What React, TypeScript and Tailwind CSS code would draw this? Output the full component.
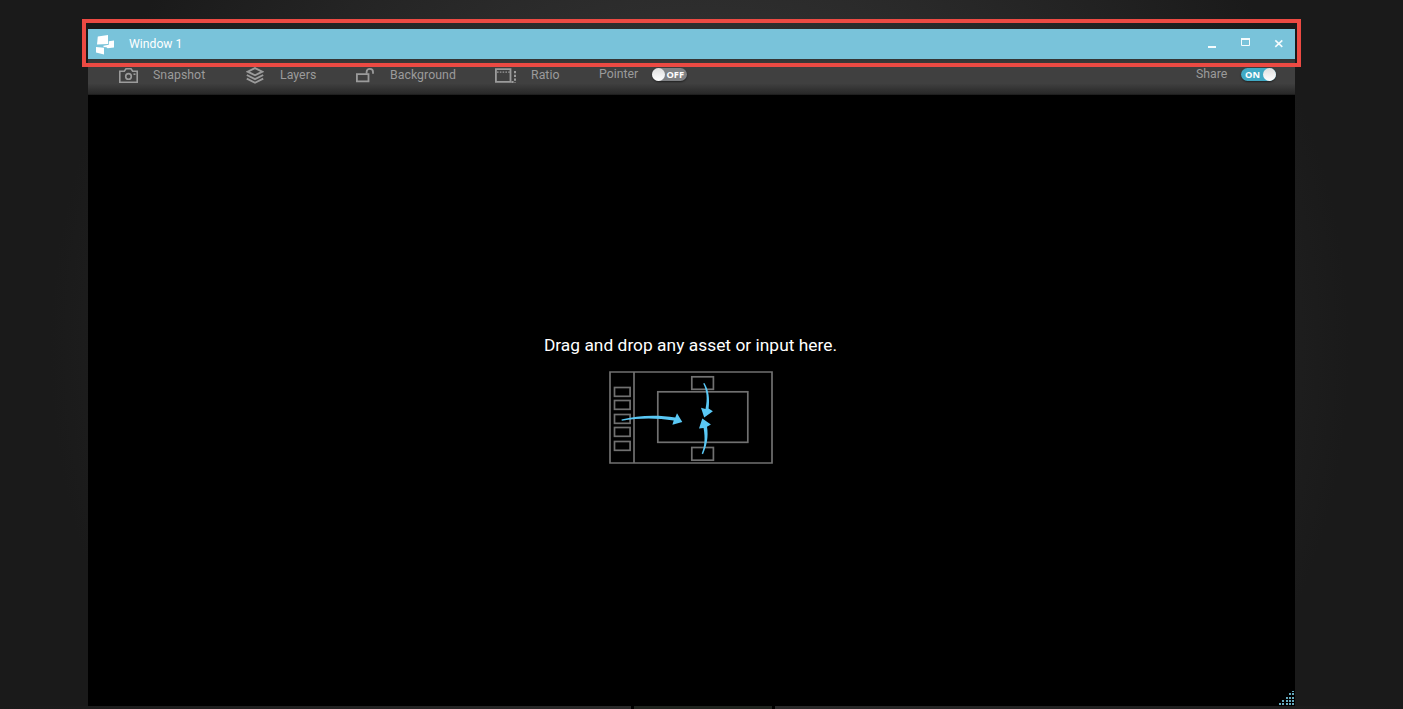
import type { ReactNode } from "react";

function AppLogo() {
  return (
    <svg width="20" height="20" viewBox="0 0 20 20" fill="#fff">
      <path d="M1.8 1.5 12 0v9L1 9.500z" />
      <path d="M12.800 6.200l5.200-.700v7l-6.400.8-1.200-1.100-2.800-.3-.2-1.200 5.400-.9z" />
      <path d="M0 12l8 .8v6.700L0 17.600z" />
    </svg>
  );
}

function CameraIcon() {
  return (
    <svg width="19" height="16" viewBox="0 0 19 16" fill="none" stroke="#9b9b9b" strokeWidth="1.6">
      <path d="M.8 3.300h4.500L7 .8h5l1.700 2.500h4.500v11H.8z" />
      <circle cx="9.500" cy="8.400" r="2.800" />
      <path d="M14.500 6.200h2" />
    </svg>
  );
}

function LayersIcon() {
  return (
    <svg width="18" height="18" viewBox="0 0 18 18" fill="none" stroke="#9b9b9b" strokeWidth="1.9">
      <path d="M9 1.100l7.300 3.600L9 8.300 1.700 4.700z" />
      <path d="M.8 8L9 12.200l8.200-4.200M.8 11.600L9 15.800l8.200-4.200" />
    </svg>
  );
}

function UnlockIcon() {
  return (
    <svg width="19" height="16" viewBox="0 0 19 16" fill="none" stroke="#9b9b9b" strokeWidth="1.8">
      <path d="M.9 6.200h11.600v7.200H.9z" />
      <path d="M10.600 5.700V3.900a3.200 3 0 0 1 6.400 0v1.900" />
    </svg>
  );
}

function RatioIcon() {
  return (
    <svg width="22" height="16" viewBox="0 0 22 16" fill="none" stroke="#9b9b9b" strokeWidth="1.8">
      <path d="M.9 1.200h14.600v12.700H.9z" />
      <path d="M2 4.100h13" strokeWidth="1.4" strokeDasharray="1.6 1.2" />
      <path d="M20 3v12M16.400 13.900h2.200" strokeWidth="2" strokeDasharray="2.2 1.6" />
    </svg>
  );
}

function Tool({ icon, label, className }: { icon: ReactNode; label: string; className: string }) {
  return (
    <div className={`flex items-center ${className}`}>
      {icon}
      <span className="h-[15px] text-[12.3px] leading-[15px] tracking-[0.05px]">{label}</span>
    </div>
  );
}

function Toggle({ on }: { on: boolean }) {
  return (
    <div
      className={`flex h-[13px] w-[35px] items-center justify-between rounded-full font-['Open_Sans',sans-serif] text-[9.3px] leading-[13px] font-bold text-white shadow-[0_1px_2px_rgba(0,0,0,0.5)] ${
        on ? "flex-row-reverse bg-[#40a9c4] pl-[4px]" : "bg-[#7f8184] pr-[3px]"
      }`}
    >
      <span className="h-[13px] w-[13px] rounded-full bg-linear-to-b from-[#dedede] to-white" />
      <span>{on ? "ON" : "OFF"}</span>
    </div>
  );
}

function WindowControls() {
  return (
    <svg width="76" height="12" viewBox="0 0 76 12" fill="none" stroke="#f4fbfd">
      <path d="M0 9h8" strokeWidth="2" />
      <path d="M33.500 1.500h8v6h-8z" />
      <path d="M33 1h9" strokeWidth="2" />
      <path d="M67.300 2.300l7 6.600M74.300 2.300l-7 6.600" strokeWidth="1.6" />
    </svg>
  );
}

const slots = [16, 29, 43, 56, 70];

function DropIllustration() {
  return (
    <svg width="164" height="93" viewBox="0 0 164 93" fill="none" stroke="#707070" strokeWidth="1.7">
      <path d="M1 1h162v91H1zM25 1v91" />
      {slots.map((y) => (
        <rect key={y} x="5.5" y={y + 0.5} width="15.6" height="8.800" />
      ))}
      <rect x="48.800" y="20.800" width="90" height="50.500" />
      <rect x="82.800" y="5.800" width="21.600" height="12.500" />
      <rect x="82.800" y="76.500" width="21.600" height="12.700" />
      <g fill="#59c8f5" stroke="none">
        <path d="M12.500 48.600C28 44.600 47 43.600 66.300 46.500L68 42.200 73.300 51 63.400 53.800 64.700 49.600C47 46.500 29 47 12.800 49.800z" />
        <path d="M94.200 12.500L95.400 12C99.800 19 100.800 28 99.600 37.500L103.900 40.300 95.200 46.500 92 36.800 96.500 38C98.600 28 98 20 94.200 12.500z" />
        <path d="M94 83.200C97.700 75 99.600 66 98 55.800L101.900 53.600 93.300 47.500 90 57.600 94.600 57C96.300 67 95.800 75 92.700 82.600z" />
      </g>
    </svg>
  );
}

const gripDots = [
  [13, 0], [10, 2], [13, 2], [7, 6], [10, 6], [13, 6],
  [3, 9], [7, 9], [10, 9], [13, 9], [0, 12], [3, 12], [7, 12], [10, 12], [13, 12],
];

function ResizeGrip() {
  return (
    <svg width="16" height="15" viewBox="0 0 16 15" fill="#65a9bd">
      {gripDots.map(([x, y]) => (
        <rect key={`${x}-${y}`} x={x} y={y} width="2" height={y === 0 ? 1 : 2} />
      ))}
    </svg>
  );
}

export default function App() {
  return (
    <div className="flex h-[709px] w-[1403px] flex-col overflow-hidden bg-[#1a1a1a] bg-[radial-gradient(circle_650px_at_700px_350px,#424242_0%,#1a1a1a_100%)] font-[Roboto,sans-serif]">
      <main className="relative mt-[29px] ml-[88px] flex h-[677px] w-[1207px] flex-col bg-black">
        <header className="flex h-[30px] shrink-0 items-center bg-[#79c3da] pr-[11px] pl-[8px] text-white">
          <div className="pt-[2px]">
            <AppLogo />
          </div>
          <h1 className="ml-[13px] text-[12.2px] leading-[15px]">Window 1</h1>
          <div className="ml-auto">
            <WindowControls />
          </div>
        </header>
        <nav className="flex h-[36px] shrink-0 items-center bg-[linear-gradient(to_bottom,#343434_0%,#404040_25%,#404040_68%,#282828_97%,#161616_100%)] pr-[19px] pb-[3px] pl-[31px] text-[#9b9b9b]">
          <Tool className="w-[127px] gap-[15px]" icon={<CameraIcon />} label="Snapshot" />
          <Tool className="w-[110px] gap-[16px]" icon={<LayersIcon />} label="Layers" />
          <Tool className="w-[139px] gap-[15px]" icon={<UnlockIcon />} label="Background" />
          <Tool className="w-[104px] gap-[14px]" icon={<RatioIcon />} label="Ratio" />
          <div className="flex items-center pb-[2px]">
            <span className="w-[53px] text-[12.3px] leading-[15px]">Pointer</span>
            <Toggle on={false} />
          </div>
          <div className="ml-auto flex items-center pb-[2px]">
            <span className="w-[45px] text-[12.3px] leading-[15px]">Share</span>
            <Toggle on />
          </div>
        </nav>
        <section className="flex grow flex-col items-center pt-[240px] pr-[2px]">
          <p className="text-[17.33px] leading-[20px] tracking-[0.03px] whitespace-nowrap text-white">
            Drag and drop any asset or input here.
          </p>
          <div className="mt-[16px]">
            <DropIllustration />
          </div>
          <div className="mt-auto -mr-[2px] self-end">
            <ResizeGrip />
          </div>
        </section>
        <div className="pointer-events-none absolute -top-[10px] -left-[6px] h-[48px] w-[1219px] border-4 border-[#ec4a43]" />
      </main>
      <footer className="flex h-[3px] gap-[3px] bg-black">
        <div className="w-[631px] bg-linear-to-r from-[#1a1a1a] to-[#2a2a2a]" />
        <div className="w-[138px] bg-[#20241f]" />
        <div className="grow bg-linear-to-r from-[#2a2a2a] to-[#1a1a1a]" />
      </footer>
    </div>
  );
}
